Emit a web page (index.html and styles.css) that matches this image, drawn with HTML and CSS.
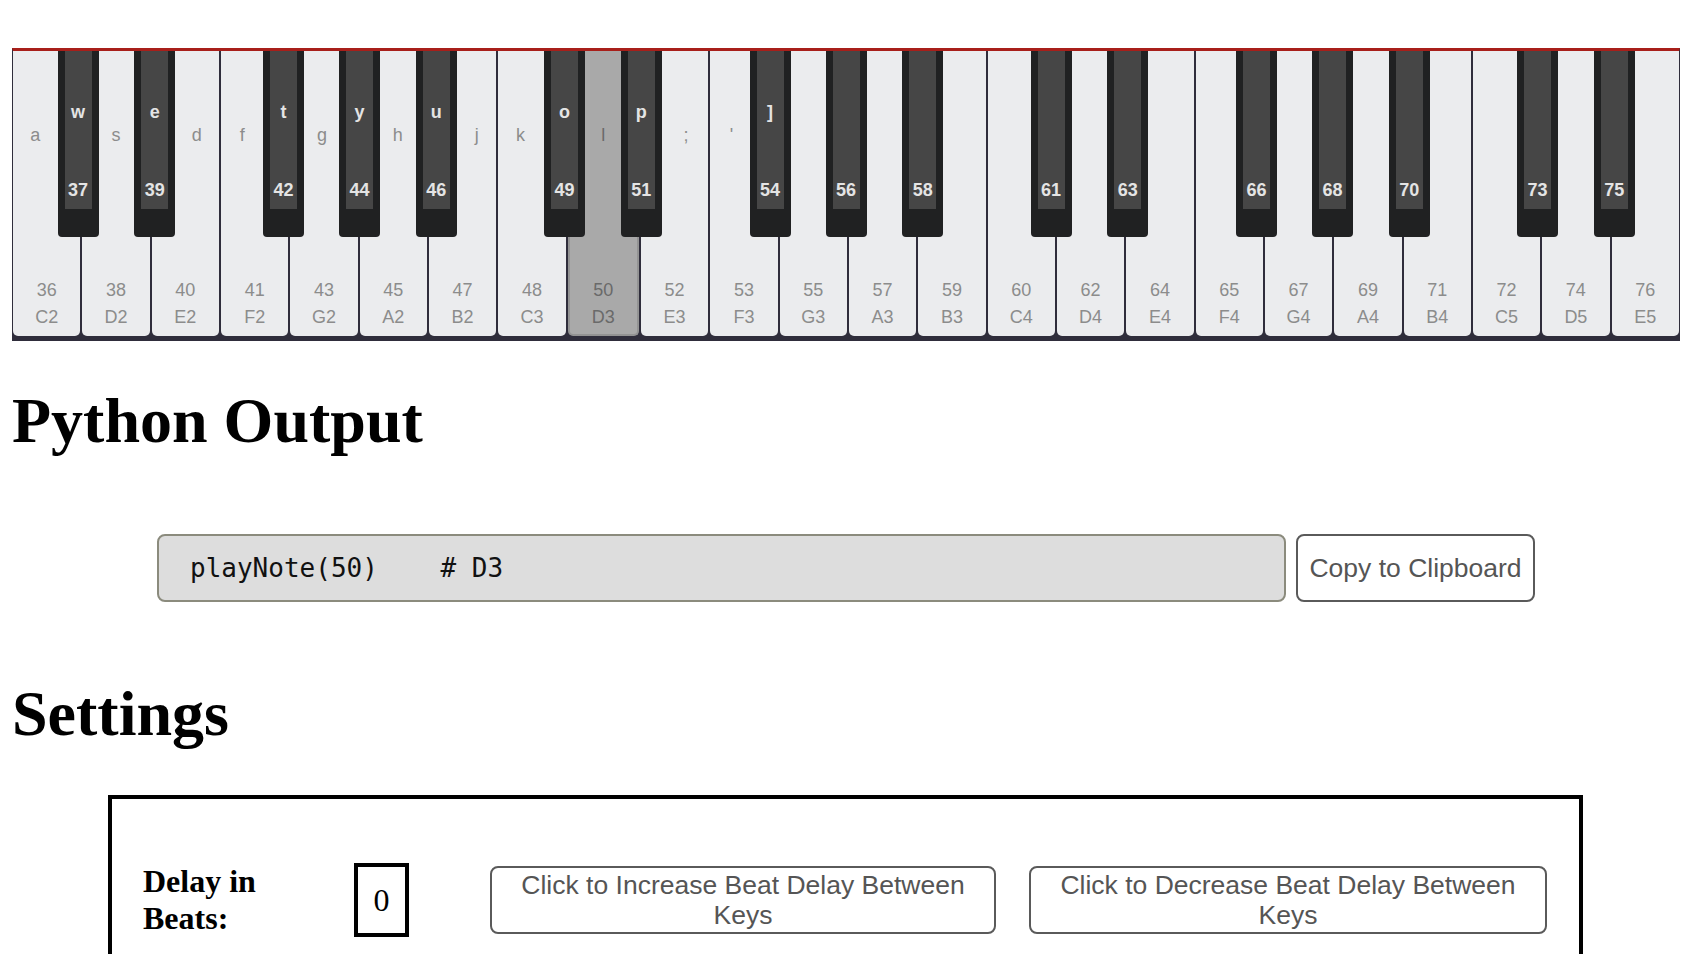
FILE: index.html
```html
<!DOCTYPE html>
<html lang="en">
<head>
<meta charset="utf-8">
<title>Piano</title>
<link rel="stylesheet" href="styles.css">
</head>
<body>
<div class="page">
  <div class="piano">
    <div class="wk c"><span class="kb">a</span><span class="num">36</span><span class="nm">C2</span></div>
    <div class="wk d"><span class="kb">s</span><span class="num">38</span><span class="nm">D2</span></div>
    <div class="wk e"><span class="kb">d</span><span class="num">40</span><span class="nm">E2</span></div>
    <div class="wk f"><span class="kb">f</span><span class="num">41</span><span class="nm">F2</span></div>
    <div class="wk g"><span class="kb">g</span><span class="num">43</span><span class="nm">G2</span></div>
    <div class="wk a"><span class="kb">h</span><span class="num">45</span><span class="nm">A2</span></div>
    <div class="wk b"><span class="kb">j</span><span class="num">47</span><span class="nm">B2</span></div>
    <div class="wk c"><span class="kb">k</span><span class="num">48</span><span class="nm">C3</span></div>
    <div class="wk d active"><span class="kb">l</span><span class="num">50</span><span class="nm">D3</span></div>
    <div class="wk e"><span class="kb">;</span><span class="num">52</span><span class="nm">E3</span></div>
    <div class="wk f"><span class="kb">'</span><span class="num">53</span><span class="nm">F3</span></div>
    <div class="wk g"><span class="kb"></span><span class="num">55</span><span class="nm">G3</span></div>
    <div class="wk a"><span class="kb"></span><span class="num">57</span><span class="nm">A3</span></div>
    <div class="wk b"><span class="kb"></span><span class="num">59</span><span class="nm">B3</span></div>
    <div class="wk c"><span class="kb"></span><span class="num">60</span><span class="nm">C4</span></div>
    <div class="wk d"><span class="kb"></span><span class="num">62</span><span class="nm">D4</span></div>
    <div class="wk e"><span class="kb"></span><span class="num">64</span><span class="nm">E4</span></div>
    <div class="wk f"><span class="kb"></span><span class="num">65</span><span class="nm">F4</span></div>
    <div class="wk g"><span class="kb"></span><span class="num">67</span><span class="nm">G4</span></div>
    <div class="wk a"><span class="kb"></span><span class="num">69</span><span class="nm">A4</span></div>
    <div class="wk b"><span class="kb"></span><span class="num">71</span><span class="nm">B4</span></div>
    <div class="wk c"><span class="kb"></span><span class="num">72</span><span class="nm">C5</span></div>
    <div class="wk d"><span class="kb"></span><span class="num">74</span><span class="nm">D5</span></div>
    <div class="wk e"><span class="kb"></span><span class="num">76</span><span class="nm">E5</span></div>

    <div class="bk cs" style="--o:0"><div class="bk-face"><span class="kb">w</span><span class="num">37</span></div></div>
    <div class="bk ds" style="--o:0"><div class="bk-face"><span class="kb">e</span><span class="num">39</span></div></div>
    <div class="bk fs" style="--o:0"><div class="bk-face"><span class="kb">t</span><span class="num">42</span></div></div>
    <div class="bk gs" style="--o:0"><div class="bk-face"><span class="kb">y</span><span class="num">44</span></div></div>
    <div class="bk as" style="--o:0"><div class="bk-face"><span class="kb">u</span><span class="num">46</span></div></div>
    <div class="bk cs" style="--o:1"><div class="bk-face"><span class="kb">o</span><span class="num">49</span></div></div>
    <div class="bk ds" style="--o:1"><div class="bk-face"><span class="kb">p</span><span class="num">51</span></div></div>
    <div class="bk fs" style="--o:1"><div class="bk-face"><span class="kb">]</span><span class="num">54</span></div></div>
    <div class="bk gs" style="--o:1"><div class="bk-face"><span class="kb"></span><span class="num">56</span></div></div>
    <div class="bk as" style="--o:1"><div class="bk-face"><span class="kb"></span><span class="num">58</span></div></div>
    <div class="bk cs" style="--o:2"><div class="bk-face"><span class="kb"></span><span class="num">61</span></div></div>
    <div class="bk ds" style="--o:2"><div class="bk-face"><span class="kb"></span><span class="num">63</span></div></div>
    <div class="bk fs" style="--o:2"><div class="bk-face"><span class="kb"></span><span class="num">66</span></div></div>
    <div class="bk gs" style="--o:2"><div class="bk-face"><span class="kb"></span><span class="num">68</span></div></div>
    <div class="bk as" style="--o:2"><div class="bk-face"><span class="kb"></span><span class="num">70</span></div></div>
    <div class="bk cs" style="--o:3"><div class="bk-face"><span class="kb"></span><span class="num">73</span></div></div>
    <div class="bk ds" style="--o:3"><div class="bk-face"><span class="kb"></span><span class="num">75</span></div></div>
  </div>

  <h1 class="title">Python Output</h1>

  <div class="output-row">
    <div class="code">playNote(50)    # D3</div>
    <button class="btn copy">Copy to Clipboard</button>
  </div>

  <h1 class="title">Settings</h1>

  <div class="settings">
    <div class="setting-row">
      <div class="setting-label">Delay in Beats:</div>
      <div class="setting-value">0</div>
      <button class="btn wide inc">Click to Increase Beat Delay Between Keys</button>
      <button class="btn wide dec">Click to Decrease Beat Delay Between Keys</button>
    </div>
  </div>
</div>
</body>
</html>
```

FILE: styles.css
```css
html {
  overflow: hidden;
}

body {
  margin: 0;
  padding: 0 0 0 12px;
  background: #ffffff;
  font-family: "Liberation Serif", "Times New Roman", serif;
  color: #000;
}

.page {
  width: 1668px;
}

/* ---------- Piano ---------- */
.piano {
  position: relative;
  box-sizing: border-box;
  width: 1668px;
  height: 293px;
  margin: 48px 0 0 0;
  display: flex;
  gap: 2px;
  background: #2f2d3b;
  border-top: 3px solid #a81f1a;
  border-left: 1px solid #2f2d3b;
  border-right: 1px solid #2f2d3b;
  padding-bottom: 5px;
  font-family: "Liberation Sans", Arial, sans-serif;
}

.wk {
  flex: 1 1 0;
  display: flex;
  flex-direction: column;
  align-items: center;
  background: #ebecee;
  border-radius: 0 0 5px 5px;
  color: #8c8c8c;
  font-size: 18px;
  line-height: 20px;
  box-sizing: border-box;
}

.wk .kb {
  align-self: stretch;
  text-align: center;
  height: 20px;
  margin-top: 74px;
}

.wk.c .kb { padding-right: 23px; }
.wk.d .kb { padding-left: 16px; padding-right: 16px; }
.wk.e .kb { padding-left: 23px; }
.wk.f .kb { padding-right: 25px; }
.wk.g .kb { padding-left: 14px; padding-right: 18px; }
.wk.a .kb { padding-left: 20px; padding-right: 11px; }
.wk.b .kb { padding-left: 28px; }

.wk .num {
  margin-top: auto;
}

.wk .nm {
  margin-top: 7.5px;
  margin-bottom: 9px;
}

.wk.active {
  background: #a9a9a9;
  border: 2px solid #939393;
  border-top: 0;
  color: #6a6a6a;
}

.wk.active .nm {
  margin-bottom: 7px;
}

.bk {
  position: absolute;
  top: 0;
  left: calc(var(--o) * 486.5px + var(--off));
  width: 41px;
  height: 186px;
  box-sizing: border-box;
  padding: 0 7px 28px;
  background: #202122;
  border-radius: 0 0 4px 4px;
  z-index: 1;
}

.bk.cs { --off: 44.5px; }
.bk.ds { --off: 121.2px; }
.bk.fs { --off: 250px; }
.bk.gs { --off: 326px; }
.bk.as { --off: 402.7px; }

.bk-face {
  height: 100%;
  background: #464646;
  display: flex;
  flex-direction: column;
  align-items: center;
  color: #e4e4e4;
  font-size: 18px;
  line-height: 20px;
  font-weight: bold;
}

.bk-face .kb {
  height: 20px;
  margin-top: 51px;
}

.bk-face .num {
  margin-top: auto;
  margin-bottom: 9.5px;
}

/* ---------- Headings ---------- */
.title {
  font-size: 64px;
  font-weight: bold;
  margin: 43px 0 43px 0;
  line-height: normal;
}

/* ---------- Output row ---------- */
.output-row {
  display: flex;
  align-items: stretch;
  gap: 10px;
  margin: 76px 0 75px 145px;
  height: 68px;
}

.code {
  box-sizing: border-box;
  width: 1129px;
  background: #dddddd;
  border: 2px solid #8b8b7d;
  border-radius: 8px;
  padding: 0 0 0 31px;
  display: flex;
  align-items: center;
  white-space: pre;
  font-family: "DejaVu Sans Mono", "Liberation Mono", monospace;
  font-size: 26px;
  color: #111;
}

.btn {
  box-sizing: border-box;
  background: #ffffff;
  border: 2px solid #5a5a5a;
  border-radius: 8px;
  color: #555555;
  font-family: "Liberation Sans", Arial, sans-serif;
  font-size: 26.5px;
  line-height: 30px;
  padding: 0 8px;
  cursor: pointer;
}

.copy {
  width: 239px;
}

/* ---------- Settings ---------- */
.settings {
  box-sizing: border-box;
  width: 1475px;
  margin: 44px 0 0 96px;
  border: 4px solid #000;
  padding: 64px 31px 60px;
}

.setting-row {
  display: flex;
  align-items: center;
}

.setting-label {
  width: 150px;
  margin-right: 61px;
  font-size: 32px;
  font-weight: bold;
  line-height: normal;
}

.setting-value {
  box-sizing: border-box;
  width: 55px;
  height: 74px;
  border: 4px solid #000;
  display: flex;
  align-items: center;
  justify-content: center;
  font-size: 32px;
  margin-right: 81px;
}

.wide {
  height: 68px;
}

.inc {
  width: 506px;
  margin-right: 33px;
}

.dec {
  width: 518px;
}
```
